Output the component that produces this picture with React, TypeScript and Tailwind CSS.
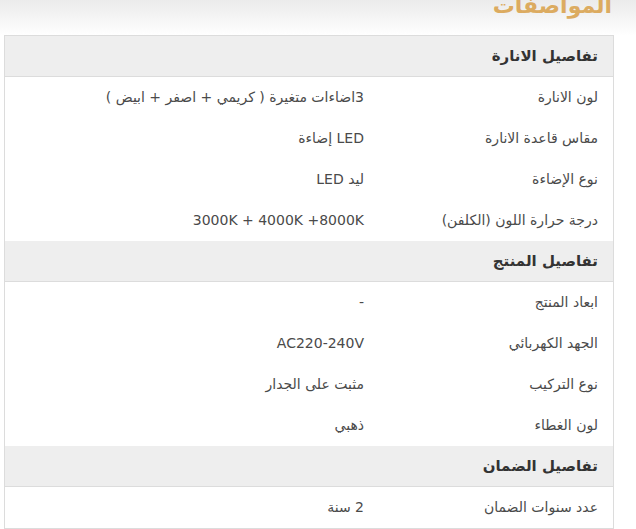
import React from "react";

type Row = { label: string; value: string };
type Section = { title: string; rows: Row[] };

const sections: Section[] = [
  {
    title: "تفاصيل الانارة",
    rows: [
      { label: "لون الانارة", value: "3اضاءات متغيرة ( كريمي + اصفر + ابيض )" },
      { label: "مقاس قاعدة الانارة", value: "LED إضاءة" },
      { label: "نوع الإضاءة", value: "ليد LED" },
      { label: "درجة حرارة اللون (الكلفن)", value: "3000K + 4000K +8000K" },
    ],
  },
  {
    title: "تفاصيل المنتج",
    rows: [
      { label: "ابعاد المنتج", value: "-" },
      { label: "الجهد الكهربائي", value: "AC220-240V" },
      { label: "نوع التركيب", value: "مثبت على الجدار" },
      { label: "لون الغطاء", value: "ذهبي" },
    ],
  },
  {
    title: "تفاصيل الضمان",
    rows: [{ label: "عدد سنوات الضمان", value: "2 سنة" }],
  },
];

const App = () => {
  return (
    <div
      dir="rtl"
      className="w-[636px] h-[529px] overflow-hidden bg-white bg-gradient-to-b from-[#ebebeb] to-white bg-no-repeat [background-size:100%_36px]"
      style={{ fontFamily: '"DejaVu Sans", sans-serif' }}
    >
      <div className="h-[35px] pr-[24px] overflow-hidden">
        <h2 className="-mt-[9px] text-[22px] leading-[30px] font-bold text-[#dcab60]">
          المواصفات
        </h2>
      </div>

      <div className="mr-[22px] w-[610px] border border-[#dcdcdc] bg-white">
        {sections.map((section) => (
          <div key={section.title}>
            <div className="h-[41px] flex items-center bg-[#eeeeee] border-b border-[#dcdcdc] pr-[15px] text-[15px] font-bold text-[#333]">
              {section.title}
            </div>
            {section.rows.map((row) => (
              <div
                key={row.label}
                className="h-[41px] flex items-center text-[14px] text-[#4a4a4a]"
              >
                <div className="w-[234px] shrink-0 pr-[15px]">{row.label}</div>
                <div className="pr-[15px]">{row.value}</div>
              </div>
            ))}
          </div>
        ))}
      </div>
    </div>
  );
};

export default App;
